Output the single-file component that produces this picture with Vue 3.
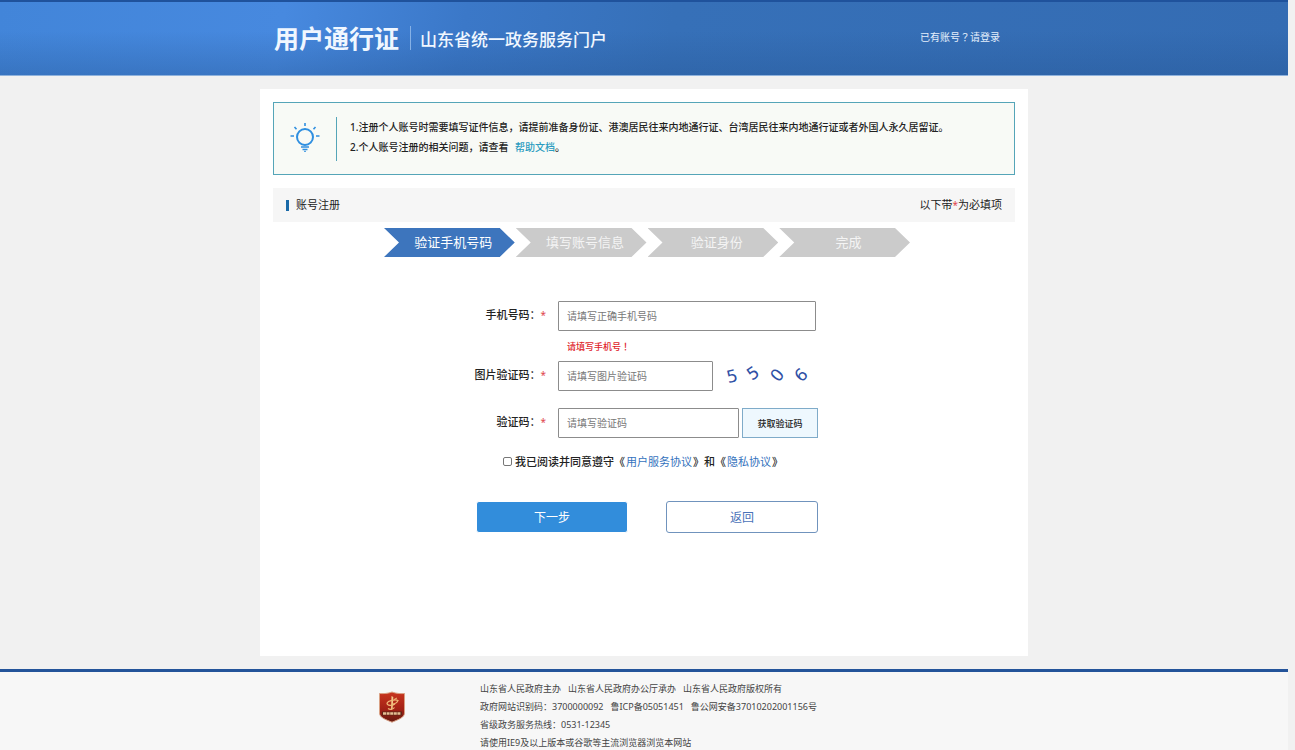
<template>
  <div class="page">
    <header class="header">
      <div class="header-inner">
        <div class="brand">
          <h1 class="brand-title">用户通行证</h1>
          <span class="brand-sub">山东省统一政务服务门户</span>
        </div>
        <a href="#" class="login-link">已有账号？请登录</a>
      </div>
    </header>

    <main class="card">
      <section class="notice">
        <div class="notice-icon">
          <svg width="30" height="30" viewBox="0 0 30 30" fill="none" stroke="#2f8fe0" stroke-width="2">
            <circle cx="15" cy="15" r="8" />
            <path d="M15 1v3M4.500 5l2 2.300M25.500 5l-2 2.300M.5 14H4M26 14h3.500" stroke-width="1.600" />
            <path d="M11 25h8M12.500 27.500h5" stroke-width="1.500" />
            <path d="M14 29.300h2" stroke-width="1" />
          </svg>
        </div>
        <div class="notice-text">
          <p>1.注册个人账号时需要填写证件信息，请提前准备身份证、港澳居民往来内地通行证、台湾居民往来内地通行证或者外国人永久居留证。</p>
          <p>2.个人账号注册的相关问题，请查看 <a href="#" class="help-link">帮助文档</a>。</p>
        </div>
      </section>

      <div class="section-bar">
        <h2 class="section-title">账号注册</h2>
        <span>以下带<i class="star">*</i>为必填项</span>
      </div>

      <ol class="steps">
        <li v-for="(step, i) in steps" :key="step" class="step" :class="{ 'step--active': i === current }">
          {{ step }}
        </li>
      </ol>

      <form class="form" @submit.prevent>
        <div class="row row--phone">
          <label for="phone" class="label">手机号码：<i class="star">*</i></label>
          <div class="field">
            <input id="phone" v-model="phone" type="text" class="input input--phone" placeholder="请填写正确手机号码" />
            <p class="error">请填写手机号！</p>
          </div>
        </div>
        <div class="row">
          <label for="captcha" class="label">图片验证码：<i class="star">*</i></label>
          <div class="field">
            <input id="captcha" v-model="captcha" type="text" class="input input--captcha" placeholder="请填写图片验证码" />
            <svg class="captcha" width="96" height="30" viewBox="0 0 96 30">
              <text
                v-for="d in digits"
                :key="d.x"
                :transform="`translate(${d.x} ${d.y}) rotate(${d.angle})`"
                text-anchor="middle"
                dy="6"
              >{{ d.char }}</text>
            </svg>
          </div>
        </div>
        <div class="row">
          <label for="code" class="label">验证码：<i class="star">*</i></label>
          <div class="field">
            <input id="code" v-model="code" type="text" class="input input--code" placeholder="请填写验证码" />
            <button type="button" class="btn-code">获取验证码</button>
          </div>
        </div>

        <div class="agree">
          <input id="agree" v-model="agreed" type="checkbox" class="checkbox" />
          <label for="agree">我已阅读并同意遵守</label>《<a href="#">用户服务协议</a>》和《<a href="#">隐私协议</a>》
        </div>

        <div class="actions">
          <button type="submit" class="btn btn--primary">下一步</button>
          <button type="button" class="btn btn--plain">返回</button>
        </div>
      </form>
    </main>

    <footer class="footer">
      <div class="footer-inner">
        <svg class="badge" width="28" height="32" viewBox="0 0 28 32">
          <defs>
            <linearGradient id="badge-fill" x1="0" y1="0" x2="0" y2="1">
              <stop offset="0" stop-color="#c9351f" />
              <stop offset="0.600" stop-color="#a02016" />
              <stop offset="1" stop-color="#641a10" />
            </linearGradient>
          </defs>
          <path
            d="M14 1C10 2.600 5 2.800 1.500 2.500V22c0 4.500 6 6.500 12.500 9.200C20.500 28.500 26.500 26.500 26.500 22V2.500C23 2.800 18 2.600 14 1z"
            fill="url(#badge-fill)"
            stroke="#d9a184"
          />
          <path d="M13.500 5l1.800 1-.6 11.500-1.700 1.500z" fill="#f3c98b" />
          <path d="M9 12c1-2 8-4 11-2.500-1 2-3 3.500-5.500 3.500M9 12c0 3 5 3 8 1M10 17.500c2 1.500 5 1 6.500-1" fill="none" stroke="#f0b878" stroke-width="1.200" />
          <path d="M16 8.500l3-1.500" stroke="#f0b878" />
          <path d="M4 20.500h20v4H4z" fill="#5f2417" />
          <path d="M5 22.500h18" stroke="#e6bd93" stroke-width="2.600" stroke-dasharray="3 .6" />
        </svg>
        <div class="footer-text">
          <p><span>山东省人民政府主办</span><span>山东省人民政府办公厅承办</span><span>山东省人民政府版权所有</span></p>
          <p><span>政府网站识别码：3700000092</span><span>鲁ICP备05051451</span><span>鲁公网安备37010202001156号</span></p>
          <p>省级政务服务热线：0531-12345</p>
          <p>请使用IE9及以上版本或谷歌等主流浏览器浏览本网站</p>
        </div>
      </div>
    </footer>
  </div>
</template>

<script setup>
import { ref } from 'vue'

const steps = ['验证手机号码', '填写账号信息', '验证身份', '完成']
const current = ref(0)

const phone = ref('')
const captcha = ref('')
const code = ref('')
const agreed = ref(false)

const digits = [
  { char: '5', x: 14, y: 15, angle: -14 },
  { char: '5', x: 35, y: 12, angle: -34 },
  { char: '0', x: 59, y: 14, angle: -52 },
  { char: '6', x: 83, y: 14, angle: -44 },
]
</script>

<style>
html,
body {
  background: #f1f1f1;
}

body {
  margin: 0;
  overflow: hidden;
}
</style>

<style scoped>
.page {
  height: 100vh;
  margin-right: 7px;
  overflow: hidden;
  font-family: 'Noto Sans', 'Noto Sans CJK SC', sans-serif;
  font-size: 11px;
  color: #222;
}

h1, h2, p, ol {
  margin: 0;
  padding: 0;
}

a {
  text-decoration: none;
}

button, input {
  box-sizing: border-box;
  font-family: inherit;
}

.header {
  box-sizing: border-box;
  height: 76px;
  border-top: 2px solid #1f529c;
  border-bottom: 1px solid #8fb2dc;
  background:
    linear-gradient(180deg, rgba(36, 84, 146, 0) 40%, rgba(36, 84, 146, 0.35) 100%),
    linear-gradient(100deg, #4285d9 0%, #4789df 22%, #3b78c8 36%, #3670b8 52%, #346cb3 100%);
}

.header-inner {
  display: flex;
  align-items: center;
  justify-content: space-between;
  width: 768px;
  height: 72px;
  margin: 0 auto;
}

.brand {
  display: flex;
  align-items: center;
  padding-left: 14px;
  color: #f0f7ff;
}

.brand-title {
  font-size: 25px;
  line-height: 32px;
  font-weight: 700;
}

.brand-sub {
  margin-left: 11px;
  padding: 4px 0 0 9px;
  border-left: 1px solid #86b1e6;
  font-size: 17px;
  font-weight: 500;
  line-height: 20px;
}

.login-link {
  margin: 0 28px 4px 0;
  font-family: 'Noto Sans', 'Noto Sans CJK TC', sans-serif;
  font-size: 10px;
  color: #e4effc;
}

.card {
  box-sizing: border-box;
  width: 768px;
  min-height: 567px;
  margin: 13px auto;
  padding: 13px;
  background: #fff;
}

.notice {
  display: flex;
  align-items: center;
  box-sizing: border-box;
  height: 73px;
  border: 1px solid #55a5b8;
  background: #f8faf6;
}

.notice-icon {
  display: flex;
  justify-content: center;
  box-sizing: border-box;
  width: 63px;
  height: 44px;
  padding-top: 5px;
  border-right: 1px solid #55a5b8;
}

.notice-text {
  padding-left: 13px;
  padding-bottom: 4px;
  font-size: 10px;
  font-weight: 500;
  line-height: 20px;
}

.help-link {
  margin-left: 4px;
  color: #2b9cc0;
}

.section-bar {
  display: flex;
  align-items: center;
  justify-content: space-between;
  height: 34px;
  margin-top: 13px;
  padding: 0 13px;
  line-height: 16px;
  background: #f6f6f6;
}

.section-title {
  display: flex;
  align-items: center;
  gap: 7px;
  font-size: 11px;
  font-weight: 400;
}

.section-title::before {
  content: '';
  width: 3px;
  height: 11px;
  background: #1a6aa8;
}

.star {
  font-size: 10px;
  font-style: normal;
  font-weight: 400;
  color: #e0484e;
}

.steps {
  display: flex;
  gap: 1px;
  width: 526px;
  margin: 6px 0 0 111px;
  list-style: none;
}

.step {
  flex: 1;
  padding-left: 8px;
  font-size: 13px;
  line-height: 29px;
  text-align: center;
  color: #f4f4f4;
  background: #cbcbcb;
  clip-path: polygon(0 0, calc(100% - 15px) 0, 100% 50%, calc(100% - 15px) 100%, 0 100%, 15px 50%);
}

.step--active {
  color: #fff;
  background: #3d75bd;
}

.form {
  margin-top: 44px;
}

.row {
  display: flex;
  margin-bottom: 17px;
}

.row--phone {
  margin-bottom: 6px;
}

.label {
  width: 273px;
  margin-right: 12px;
  font-weight: 500;
  line-height: 28px;
  text-align: right;
}

.field {
  display: flex;
  flex-wrap: wrap;
  width: 262px;
}

.input {
  height: 30px;
  padding: 0 8px;
  border: 1px solid #8c8c8c;
  border-radius: 1px;
  font-size: 10px;
  background: #fff;
}

.input::placeholder {
  color: #777;
}

.input--phone { width: 258px; }
.input--captcha { width: 155px; }
.input--code { width: 181px; }

.error {
  width: 100%;
  padding-left: 9px;
  font-family: 'Noto Sans', 'Noto Sans CJK TC', sans-serif;
  font-size: 9px;
  font-weight: 500;
  line-height: 16px;
  margin-top: 8px;
  color: #e0242c;
}

.captcha {
  margin-left: 5px;
  font-family: 'DejaVu Sans', sans-serif;
  font-size: 17px;
  fill: #2f50a5;
}

.btn-code {
  width: 76px;
  height: 30px;
  margin-left: 3px;
  padding: 0;
  border: 1px solid #7fabc9;
  font-size: 9px;
  font-weight: 500;
  color: #222;
  background: #eef8fe;
}

.agree {
  display: flex;
  align-items: center;
  height: 12px;
  margin-left: 230px;
  font-weight: 500;
}

.agree a {
  margin: 0 1px;
  font-weight: 400;
  color: #3472bd;
}

.checkbox {
  appearance: none;
  width: 9px;
  height: 9px;
  margin: 0 3px 0 0;
  border: 1px solid #777;
  border-radius: 2px;
  background: #fff;
}

.checkbox:checked {
  background: #328ddb;
}

.actions {
  display: flex;
  gap: 38px;
  margin: 34px 0 0 203px;
}

.btn {
  width: 152px;
  height: 32px;
  border-radius: 3px;
  font-size: 12px;
}

.btn--primary {
  border: 1px solid #fff;
  color: #fff;
  background: #328ddb;
}

.btn--plain {
  border: 1px solid #7093bd;
  color: #4a72b8;
  background: #fff;
}

.footer {
  border-top: 3px solid #24549a;
  background: #f7f7f7;
}

.footer-inner {
  display: flex;
  width: 768px;
  margin: 0 auto;
  padding: 8px 0;
}

.badge {
  margin: 11px 74px 0 118px;
}

.footer-text {
  font-size: 9px;
  line-height: 18px;
  color: #444;
}

.footer-text span + span {
  margin-left: 7px;
}
</style>
